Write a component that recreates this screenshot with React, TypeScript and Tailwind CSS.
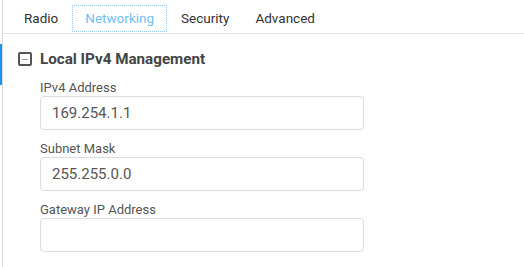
const tabs = ['Radio', 'Networking', 'Security', 'Advanced'];

function Field({ label, value }: { label: string; value: string }) {
  return (
    <div className="mb-[10px]">
      <div className="text-[13px] leading-[17px] text-[#555]">{label}</div>
      <div className="w-[324px] h-[34px] border border-[#d9dde1] rounded-[4px] flex items-center px-[11px] text-[15px] text-[#555]">
        {value}
      </div>
    </div>
  );
}

export default function App() {
  return (
    <div
      className="w-[524px] h-[267px] bg-white flex overflow-hidden"
      style={{ fontFamily: 'Roboto, "Liberation Sans", sans-serif' }}
    >
      <div className="w-[2px] shrink-0">
        <div className="mt-[44px] h-[41px] bg-[#1a95e6]" />
      </div>
      <div className="flex-1 border-l border-[#dcdcdc]">
        <div className="h-[34px] border-b border-[#e3e5e7] flex items-start pl-[9px] gap-[2px] pt-[5px]">
          {tabs.map((t) =>
            t === 'Networking' ? (
              <div
                key={t}
                className="h-[27px] px-[12px] flex items-center text-[13.5px] text-[#6fc0f6] border border-dotted border-[#8ccdf7]"
              >
                {t}
              </div>
            ) : (
              <div key={t} className="h-[27px] px-[12px] flex items-center text-[13.5px] text-[#333]">
                {t}
              </div>
            )
          )}
        </div>
        <div className="pl-[15px] pt-[17px]">
          <div className="flex items-center h-[16px] mb-[12px]">
            <div className="w-[14px] h-[14px] border-2 border-[#555] rounded-[2px] flex items-center justify-center">
              <div className="w-[6px] h-[1px] bg-[#999]" />
            </div>
            <span className="ml-[8px] text-[15.2px] font-bold text-[#444]">Local IPv4 Management</span>
          </div>
          <div className="pl-[22px]">
            <Field label="IPv4 Address" value="169.254.1.1" />
            <Field label="Subnet Mask" value="255.255.0.0" />
            <Field label="Gateway IP Address" value="" />
          </div>
        </div>
      </div>
    </div>
  );
}
